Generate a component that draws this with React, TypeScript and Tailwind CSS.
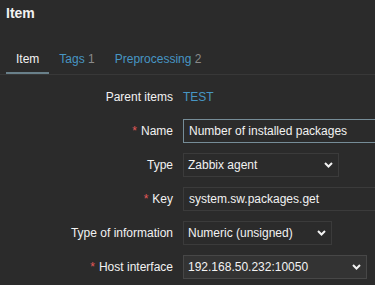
import React from "react";

const font = { fontFamily: '"Liberation Sans", Arial, sans-serif' };

function Chevron() {
  return (
    <svg width="9" height="6" viewBox="0 0 9 6" className="shrink-0">
      <polyline points="1,1 4.5,4.5 8,1" fill="none" stroke="#f2f2f2" strokeWidth="2" />
    </svg>
  );
}

function Label({ children, req }: { children: React.ReactNode; req?: boolean }) {
  return (
    <div className="w-[173px] shrink-0 pr-0 text-right text-[12px] leading-[14px] text-[#f2f2f2]">
      {req && <span className="text-[#e45959] mr-[4px]">*</span>}
      {children}
    </div>
  );
}

function Select({ value, w, hover }: { value: string; w: string; hover?: boolean }) {
  return (
    <div
      className={`${w} h-[24px] flex items-center justify-between pl-[4px] pr-[5px] border ${
        hover ? "bg-[#333333] border-[#474747]" : "bg-[#2b2b2b] border-[#3b3b3b]"
      } text-[12px] text-[#f2f2f2]`}
    >
      <span>{value}</span>
      <Chevron />
    </div>
  );
}

export default function App() {
  return (
    <div className="w-[375px] h-[285px] bg-[#2b2b2b] overflow-hidden" style={font}>
      <div className="h-[46px] pt-[5px] pl-[6px]">
        <div className="text-[14px] leading-[16px] font-bold text-[#f2f2f2]">Item</div>
      </div>
      <div className="flex border-b border-[#383838] pl-[6px] h-[29px]">
        <div className="px-[10px] pt-[6px] h-[28px] border-b-2 border-[#69808a] text-[12px] leading-[14px] text-[#f2f2f2]">
          Item
        </div>
        <div className="px-[10px] pt-[6px] text-[12px] leading-[14px] text-[#4796c4]">
          Tags <span className="text-[#8a8a8a]">1</span>
        </div>
        <div className="px-[10px] pt-[6px] text-[12px] leading-[14px] text-[#4796c4]">
          Preprocessing <span className="text-[#8a8a8a]">2</span>
        </div>
      </div>
      <div className="pt-[10px] flex flex-col gap-[10px]">
        <div className="flex items-center h-[24px] gap-[10px]">
          <Label>Parent items</Label>
          <span className="text-[12px] text-[#4796c4]">TEST</span>
        </div>
        <div className="flex items-center h-[24px] gap-[10px]">
          <Label req>Name</Label>
          <div className="w-[453px] shrink-0 h-[24px] flex items-center px-[5px] border border-[#768d98] text-[12px] text-[#f2f2f2]">
            Number of installed packages
          </div>
        </div>
        <div className="flex items-center h-[24px] gap-[10px]">
          <Label>Type</Label>
          <Select value="Zabbix agent" w="w-[156px]" />
        </div>
        <div className="flex items-center h-[24px] gap-[10px]">
          <Label req>Key</Label>
          <div className="w-[453px] shrink-0 h-[24px] flex items-center px-[5px] border border-[#3b3b3b] text-[12px] text-[#f2f2f2]">
            system.sw.packages.get
          </div>
        </div>
        <div className="flex items-center h-[24px] gap-[10px]">
          <Label>Type of information</Label>
          <Select value="Numeric (unsigned)" w="w-[149px]" />
        </div>
        <div className="flex items-center h-[24px] gap-[10px]">
          <Label req>Host interface</Label>
          <Select value="192.168.50.232:10050" w="w-[184px]" hover />
        </div>
      </div>
    </div>
  );
}
